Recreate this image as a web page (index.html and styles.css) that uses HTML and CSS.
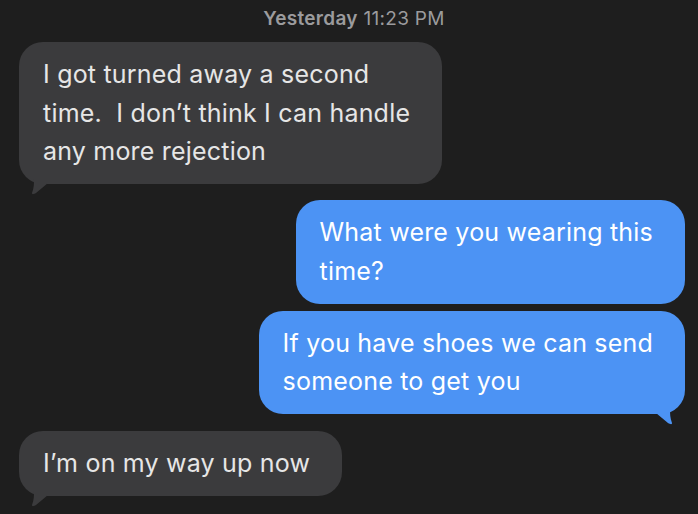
FILE: index.html
```html
<!DOCTYPE html>
<html>
    <head>
        <link rel="stylesheet" href="styles.css">
    </head>
    <body>
        <div class='stamp'><b>Yesterday</b> 11:23 PM</div>

        <div class='row in'>
            <div class='bubble'>
                I got turned away a second<br/>
                time.&nbsp; I don’t think I can handle<br/>
                any more rejection
                <svg class='tail' viewBox='0 0 26 16'><path d='M0 0 L12 0 C12 4 12 9 10 14 C10 16 12 15 14 14 C18 11 22 7 26 4 L26 0 Z'/></svg>
            </div>
        </div>

        <div class='row out'>
            <div class='bubble'>
                What were you wearing this<br/>
                time?
            </div>
        </div>

        <div class='row out last'>
            <div class='bubble'>
                If you have shoes we can send<br/>
                someone to get you
                <svg class='tail' viewBox='0 0 26 16'><path d='M0 0 L12 0 C12 4 12 9 10 14 C10 16 12 15 14 14 C18 11 22 7 26 4 L26 0 Z'/></svg>
            </div>
        </div>

        <div class='row in'>
            <div class='bubble'>
                I’m on my way up now
                <svg class='tail' viewBox='0 0 26 16'><path d='M0 0 L12 0 C12 4 12 9 10 14 C10 16 12 15 14 14 C18 11 22 7 26 4 L26 0 Z'/></svg>
            </div>
        </div>
    </body>
</html>
```

FILE: styles.css
```css
body {
    margin: 0;
    background: #1e1e1e;
    font-family: 'Inter', 'Liberation Sans', Arial, sans-serif;
    overflow: hidden;
}

.stamp {
    text-align: center;
    color: #9b9b9d;
    font-size: 19px;
    line-height: 22px;
    letter-spacing: 0.3px;
    padding: 8px 0 12px 10px;
}

.stamp b {
    font-weight: 600;
}

.row {
    display: flex;
    padding: 0 13px 0 19px;
    margin-bottom: 16px;
}

.row.out {
    justify-content: flex-end;
    margin-bottom: 7px;
}

.row.out.last {
    margin-bottom: 17px;
}

.bubble {
    position: relative;
    font-size: 25px;
    line-height: 38.5px;
    letter-spacing: 0.2px;
    padding: 13px 32px 13.5px 24px;
    border-radius: 24px;
    white-space: nowrap;
}

.in .bubble {
    background: #3b3b3d;
    color: #e6e6e6;
}

.out .bubble {
    background: #4c93f4;
    color: #ffffff;
}

.tail {
    position: absolute;
    width: 26px;
    height: 16px;
    bottom: -11px;
}

.in .tail {
    left: 3px;
    fill: #3b3b3d;
}

.out .tail {
    right: 3px;
    fill: #4c93f4;
    transform: scaleX(-1);
}
```
